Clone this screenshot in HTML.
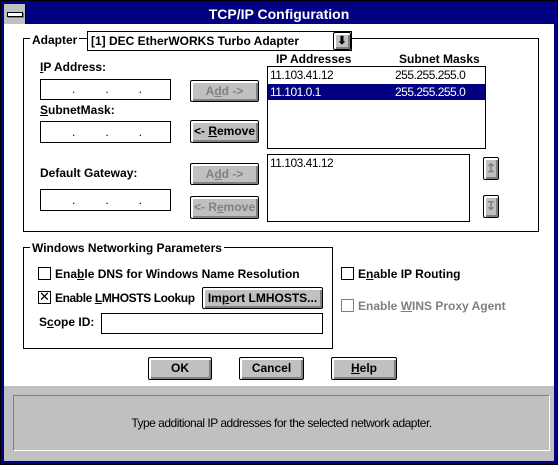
<!DOCTYPE html>
<html><head><style>
*{margin:0;padding:0;box-sizing:border-box}
body{width:558px;height:465px;background:#000080;position:relative;overflow:hidden;font-family:"Liberation Sans",sans-serif;font-size:12px;font-weight:bold;color:#000}
.a{position:absolute}
.frame{left:0;top:0;width:558px;height:465px;border:1px solid #000;background:#000080}
.body{left:4px;top:24px;width:550px;height:437px;background:#fff}
.title{left:4px;top:4px;width:550px;height:20px;color:#fff;text-align:center;font-size:14px;line-height:20px}
.sys{left:4px;top:4px;width:22px;height:20px;background:#c0c0c0;border-right:1px solid #000}
.sys:after{content:"";position:absolute;left:3px;top:8px;width:14px;height:3px;background:#fff;border:1px solid #000;box-shadow:1px 1px 0 #808080}
.grp{border:1px solid #000}
.lbl{background:#fff;padding:0 2px;line-height:14px}
.inp{border:1px solid #000;background:#fff}
.btn{background:#c0c0c0;border:1px solid #000;border-radius:2px;box-shadow:inset 1px 1px 0 #fff,inset 2px 2px 0 #fff,inset -1px -1px 0 #808080,inset -2px -2px 0 #808080;text-align:center;line-height:20px}
.dis{color:#808080}
.cb{width:13px;height:13px;border:1px solid #000;background:#fff}
u{text-decoration:underline}
.n{font-weight:normal;font-size:12px;letter-spacing:-0.5px}
</style></head><body>
<div class="a frame"></div>
<div class="a title">TCP/IP Configuration</div>
<div class="a sys"></div>
<div class="a body"></div>

<div class="a grp" style="left:23px;top:38px;width:516px;height:194px"></div>
<div class="a lbl" style="left:30px;top:33px">Adapter</div>
<div class="a inp" style="left:87px;top:31px;width:265px;height:20px;padding-left:3px;line-height:18px">[1] DEC EtherWORKS Turbo Adapter</div>
<div class="a btn" style="left:333px;top:32px;width:18px;height:18px;line-height:16px;font-size:11px">&#x2B07;</div>

<div class="a" style="left:40px;top:60px"><u>I</u>P Address:</div>
<div class="a inp" style="left:40px;top:79px;width:131px;height:21px"></div>
<div class="a" style="left:40px;top:103px"><u>S</u>ubnetMask:</div>
<div class="a inp" style="left:40px;top:121px;width:131px;height:22px"></div>
<div class="a" style="left:40px;top:166px">Default Gateway:</div>
<div class="a inp" style="left:40px;top:189px;width:131px;height:22px"></div>
<div class="a n" style="left:72px;top:82px;width:80px;letter-spacing:30px">...</div>
<div class="a n" style="left:72px;top:125px;letter-spacing:30px">...</div>
<div class="a n" style="left:72px;top:193px;letter-spacing:30px">...</div>

<div class="a btn dis" style="left:190px;top:80px;width:69px;height:22px">A<u>d</u>d -&gt;</div>
<div class="a btn" style="left:190px;top:120px;width:69px;height:23px">&lt;- <u>R</u>emove</div>
<div class="a btn dis" style="left:190px;top:163px;width:69px;height:22px">A<u>d</u>d -&gt;</div>
<div class="a btn dis" style="left:190px;top:196px;width:69px;height:23px">&lt;- R<u>e</u>move</div>

<div class="a" style="left:276px;top:52px">IP Addresses</div>
<div class="a" style="left:399px;top:52px">Subnet Masks</div>
<div class="a inp" style="left:267px;top:66px;width:219px;height:83px"></div>
<div class="a n" style="left:270px;top:68px">11.103.41.12</div>
<div class="a n" style="left:395px;top:68px">255.255.255.0</div>
<div class="a" style="left:268px;top:84px;width:217px;height:16px;background:#000080"></div>
<div class="a n" style="left:270px;top:85px;color:#fff">11.101.0.1</div>
<div class="a n" style="left:395px;top:85px;color:#fff">255.255.255.0</div>

<div class="a inp" style="left:267px;top:154px;width:203px;height:68px"></div>
<div class="a n" style="left:270px;top:156px">11.103.41.12</div>
<div class="a btn dis" style="left:483px;top:157px;width:16px;height:23px">&#x21A5;</div>
<div class="a btn dis" style="left:483px;top:195px;width:16px;height:23px">&#x21A7;</div>

<div class="a grp" style="left:23px;top:247px;width:310px;height:102px"></div>
<div class="a lbl" style="left:30px;top:241px">Windows Networking Parameters</div>
<div class="a cb" style="left:38px;top:267px"></div>
<div class="a" style="left:55px;top:267px">Ena<u>b</u>le DNS for Windows Name Resolution</div>
<div class="a cb" style="left:38px;top:291px;font-weight:normal;font-size:13px;line-height:10px;text-align:center">&#x2715;</div>
<div class="a" style="left:55px;top:291px;letter-spacing:-0.4px">Enable <u>L</u>MHOSTS Lookup</div>
<div class="a btn" style="left:202px;top:287px;width:121px;height:22px">Im<u>p</u>ort LMHOSTS...</div>
<div class="a" style="left:39px;top:315px">S<u>c</u>ope ID:</div>
<div class="a inp" style="left:101px;top:313px;width:222px;height:21px"></div>

<div class="a cb" style="left:341px;top:267px"></div>
<div class="a" style="left:358px;top:267px">E<u>n</u>able IP Routing</div>
<div class="a cb" style="left:341px;top:299px;border-color:#808080"></div>
<div class="a dis" style="left:358px;top:299px">Enable <u>W</u>INS Proxy Agent</div>

<div class="a btn" style="left:148px;top:357px;width:64px;height:23px">OK</div>
<div class="a btn" style="left:239px;top:357px;width:65px;height:23px">Cancel</div>
<div class="a btn" style="left:331px;top:357px;width:66px;height:23px"><u>H</u>elp</div>

<div class="a" style="left:4px;top:386px;width:550px;height:75px;background:#c0c0c0"></div>
<div class="a" style="left:13px;top:395px;width:537px;height:56px;border-top:1px solid #808080;border-left:1px solid #808080;border-right:1px solid #fff;border-bottom:1px solid #fff"></div>
<div class="a n" style="left:13px;top:416px;width:537px;text-align:center">Type additional IP addresses for the selected network adapter.</div>
</body></html>
